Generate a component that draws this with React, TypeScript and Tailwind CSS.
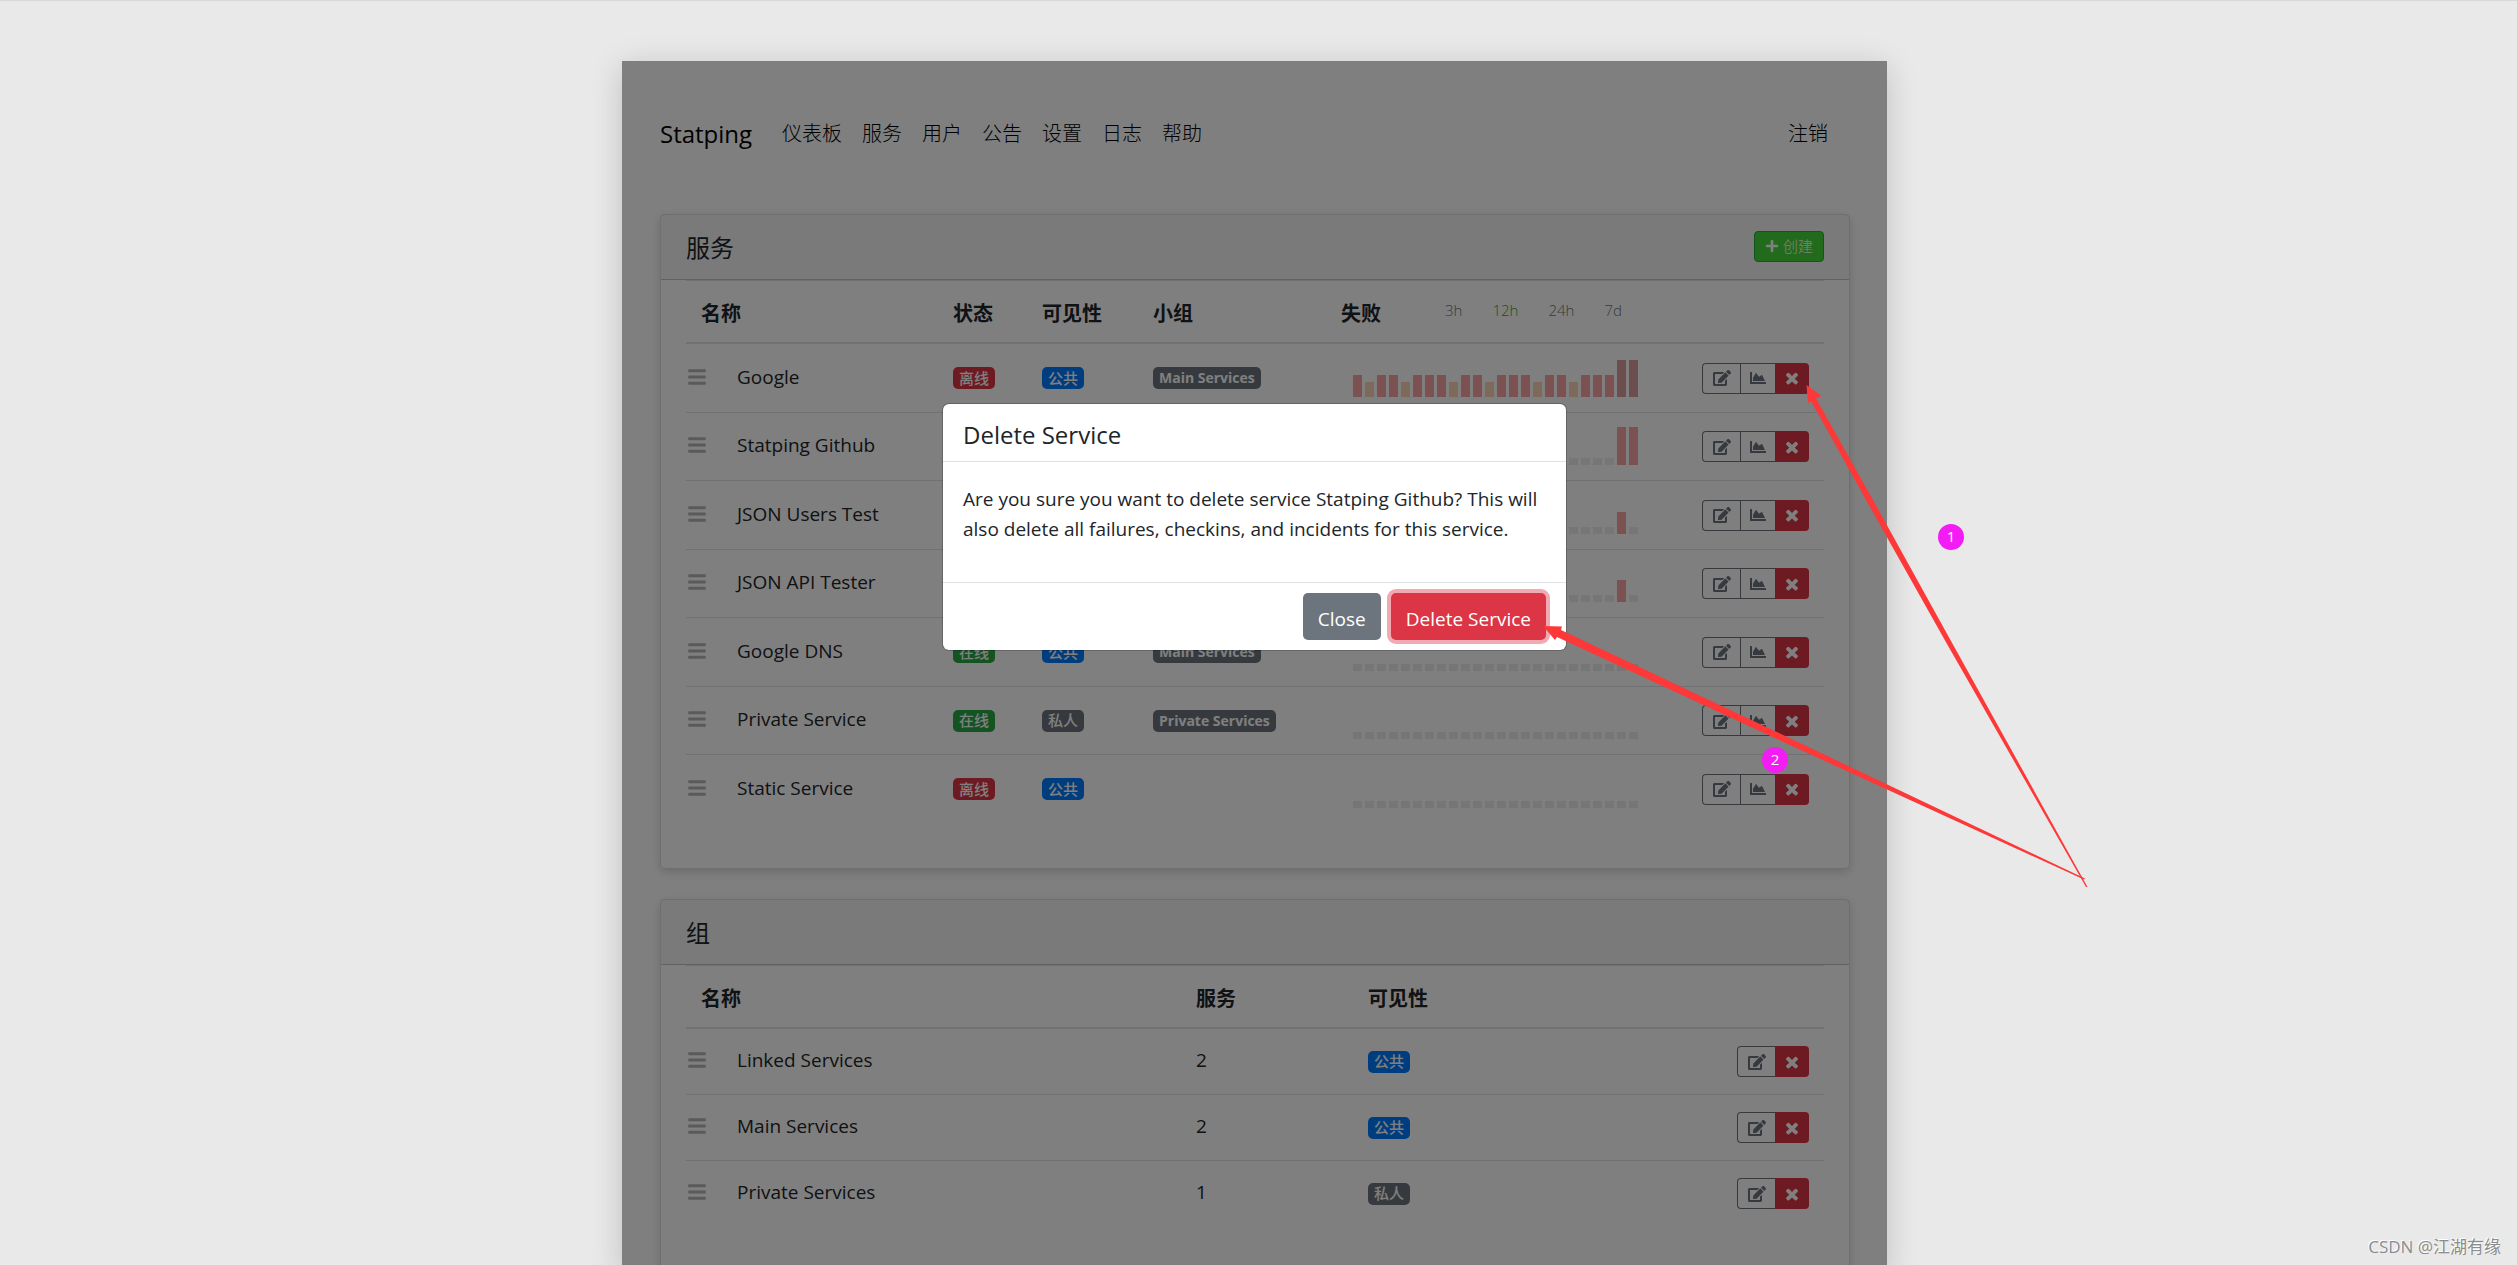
import type { ReactNode } from "react";
import { FaBars, FaChartArea, FaEdit, FaPlus } from "react-icons/fa";

type Tone = "red" | "green" | "blue" | "gray";

const toneClass: Record<Tone, string> = {
  red: "bg-[#dc3545]",
  green: "bg-[#28a745]",
  blue: "bg-[#007bff]",
  gray: "bg-[#6c757d]",
};

const barClass: Record<string, string> = {
  r: "h-[22px] bg-[#f8a2a2]",
  o: "h-[15px] bg-[#fcd4b4]",
  d: "h-[37px] bg-[#d89c9c]",
  t: "h-[38px] bg-[#f8a2a2]",
  ".": "h-[7px] bg-[#ececec]",
};

type Service = {
  name: string;
  online: boolean;
  visible: boolean;
  group?: string;
  bars: string;
};

const quiet = "........................";

const services: Service[] = [
  { name: "Google", online: false, visible: true, group: "Main Services", bars: "rorrorrrorrorrrorrorrrdd" },
  { name: "Statping Github", online: true, visible: true, group: "Main Services", bars: "......................tt" },
  { name: "JSON Users Test", online: true, visible: true, group: "Main Services", bars: "......................r." },
  { name: "JSON API Tester", online: true, visible: true, group: "Main Services", bars: "......................r." },
  { name: "Google DNS", online: true, visible: true, group: "Main Services", bars: quiet },
  { name: "Private Service", online: true, visible: false, group: "Private Services", bars: quiet },
  { name: "Static Service", online: false, visible: true, bars: quiet },
];

const groups = [
  { name: "Linked Services", count: 2, visible: true },
  { name: "Main Services", count: 2, visible: true },
  { name: "Private Services", count: 1, visible: false },
];

const navItems = ["仪表板", "服务", "用户", "公告", "设置", "日志", "帮助"];

const badge = "inline-flex h-[22px] items-center rounded-[5px] px-1.5 leading-none whitespace-nowrap text-white";

function Badge({ tone, children }: { tone: Tone; children: ReactNode }) {
  return <span className={`${badge} text-[15px] font-medium ${toneClass[tone]}`}>{children}</span>;
}

function GroupBadge({ children }: { children: ReactNode }) {
  return <span className={`${badge} bg-[#6c757d] text-sm font-bold`}>{children}</span>;
}

function Visibility({ visible }: { visible: boolean }) {
  return <Badge tone={visible ? "blue" : "gray"}>{visible ? "公共" : "私人"}</Badge>;
}

function NameCell({ name }: { name: string }) {
  return (
    <div className="flex items-center pb-[3px]">
      <FaBars className="ml-0.5 h-5 w-[18px] text-[#b4b4b4]" />
      <span className="ml-[31px] text-[19px] leading-6">{name}</span>
    </div>
  );
}

function CrossIcon() {
  return (
    <svg viewBox="0 0 1792 1792" className="size-[18px]" fill="currentColor" aria-hidden="true">
      <path d="M1490 1322q0 40-28 68l-136 136q-28 28-68 28t-68-28l-294-294-294 294q-28 28-68 28t-68-28l-136-136q-28-28-28-68t28-68l294-294-294-294q-28-28-28-68t28-68l136-136q28-28 68-28t68 28l294 294 294-294q28-28 68-28t68 28l136 136q28 28 28 68t-28 68l-294 294 294 294q28 28 28 68z" />
    </svg>
  );
}

function RowActions({ name, chart }: { name: string; chart?: boolean }) {
  return (
    <div className="ml-auto flex h-[31px] w-max text-[#6c757d]">
      <button
        aria-label={`Edit ${name}`}
        className="flex w-[38px] items-center justify-center rounded-l-[4px] border border-r-0 border-[#6c757d]"
      >
        <FaEdit className="h-4 w-[18px]" />
      </button>
      {chart && (
        <button
          aria-label={`Chart ${name}`}
          className="flex w-[35px] items-center justify-center border border-r-0 border-[#6c757d]"
        >
          <FaChartArea className="size-4" />
        </button>
      )}
      <button
        aria-label={`Delete ${name}`}
        className="flex w-[34px] items-center justify-center rounded-r-[4px] bg-[#dc3545] text-white"
      >
        <CrossIcon />
      </button>
    </div>
  );
}

function Card({ title, action, children }: { title: string; action?: ReactNode; children: ReactNode }) {
  return (
    <section className="rounded-[5px] border border-black/[.125] bg-white shadow-[0_3px_10px_rgba(0,0,0,0.16)]">
      <header className="flex h-[65px] items-center justify-between border-b border-black/[.2] bg-black/[.045] px-[25px]">
        <h2 className="pt-0.5 text-2xl">{title}</h2>
        {action}
      </header>
      <div className="px-[25px] pb-[45px]">{children}</div>
    </section>
  );
}

const th = "h-16 border-t border-b-2 border-[#dee2e6] px-[15px] pt-1 text-left text-xl font-bold";

function ServicesTable() {
  return (
    <table className="w-full table-fixed border-separate border-spacing-0">
      <colgroup>
        <col className="w-[252px]" />
        <col className="w-[89px]" />
        <col className="w-[111px]" />
        <col className="w-[188px]" />
        <col className="w-[340px]" />
        <col />
      </colgroup>
      <thead>
        <tr>
          <th className={th}>名称</th>
          <th className={th}>状态</th>
          <th className={th}>可见性</th>
          <th className={th}>小组</th>
          <th className={th}>
            <div className="flex items-center">
              <span>失败</span>
              <div className="ml-16 flex gap-[30px] pb-1.5 text-[15px] font-light text-[#6c757d]">
                <button>3h</button>
                <button className="text-[#28a745]">12h</button>
                <button>24h</button>
                <button>7d</button>
              </div>
            </div>
          </th>
          <th className={th} aria-label="操作" />
        </tr>
      </thead>
      <tbody>
        {services.map((s, i) => {
          const line = i > 0 ? "border-t border-[#dee2e6]" : "";
          return (
            <tr key={s.name} className={i > 0 && i % 2 === 0 ? "h-[69px]" : "h-[68px]"}>
              <td className={line}>
                <NameCell name={s.name} />
              </td>
              <td className={`px-[15px] ${line}`}>
                <div className="flex">
                  <Badge tone={s.online ? "green" : "red"}>{s.online ? "在线" : "离线"}</Badge>
                </div>
              </td>
              <td className={`px-[15px] ${line}`}>
                <div className="flex">
                  <Visibility visible={s.visible} />
                </div>
              </td>
              <td className={`px-[15px] ${line}`}>
                <div className="flex">{s.group && <GroupBadge>{s.group}</GroupBadge>}</div>
              </td>
              <td className={`px-[15px] align-bottom ${line}`}>
                <div className="mb-[15px] ml-3 flex h-[38px] items-end gap-[3px]">
                  {s.bars.split("").map((b, k) => (
                    <span key={k} className={`w-[9px] ${barClass[b]}`} />
                  ))}
                </div>
              </td>
              <td className={`pr-[15px] ${line}`}>
                <RowActions name={s.name} chart />
              </td>
            </tr>
          );
        })}
      </tbody>
    </table>
  );
}

function GroupsTable() {
  return (
    <table className="w-full table-fixed border-separate border-spacing-0">
      <colgroup>
        <col className="w-[495px]" />
        <col className="w-[172px]" />
        <col className="w-[280px]" />
        <col />
      </colgroup>
      <thead>
        <tr>
          <th className={th}>名称</th>
          <th className={th}>服务</th>
          <th className={th}>可见性</th>
          <th className={th} aria-label="操作" />
        </tr>
      </thead>
      <tbody>
        {groups.map((g, i) => {
          const line = i > 0 ? "border-t border-[#dee2e6]" : "";
          return (
            <tr key={g.name} className={i > 0 ? "h-[66px]" : "h-[65px]"}>
              <td className={line}>
                <NameCell name={g.name} />
              </td>
              <td className={`px-[15px] pb-[3px] text-[19px] ${line}`}>{g.count}</td>
              <td className={`px-[15px] ${line}`}>
                <div className="flex">
                  <Visibility visible={g.visible} />
                </div>
              </td>
              <td className={`pr-[15px] ${line}`}>
                <RowActions name={g.name} />
              </td>
            </tr>
          );
        })}
      </tbody>
    </table>
  );
}

function DeleteDialog() {
  return (
    <div className="absolute inset-0 flex items-start justify-center bg-black/50 pt-[343px]">
      <div
        role="dialog"
        aria-labelledby="dialog-title"
        className="w-full max-w-[623px] rounded-[6px] bg-white shadow-[0_0_0_1px_rgba(0,0,0,0.2)]"
      >
        <h3 id="dialog-title" className="border-b border-[#dee2e6] px-5 pt-3.5 pb-2.5 text-2xl leading-[33px] font-medium">
          Delete Service
        </h3>
        <p className="px-5 pt-[22px] pb-[38px] text-[19px] leading-[30px]">
          Are you sure you want to delete service Statping Github? This will also delete all failures, checkins, and
          incidents for this service.
        </p>
        <div className="flex justify-end gap-2.5 border-t border-[#dee2e6] px-5 py-2.5">
          <button className="h-[47px] rounded-[5px] bg-[#6c757d] px-[15px] pt-1.5 text-[19px] text-white">Close</button>
          <button className="h-[47px] rounded-[5px] bg-[#dc3545] px-[15px] pt-1.5 text-[19px] text-white shadow-[0_0_0_4px_#f1aab1]">
            Delete Service
          </button>
        </div>
      </div>
    </div>
  );
}

/* Tutorial arrows and step markers drawn above the page. */
function Annotations() {
  return (
    <>
      <svg
        className="pointer-events-none absolute top-0 left-0 overflow-visible"
        width="1265"
        height="1204"
        viewBox="622 61 1265 1204"
        fill="#fd3838"
        aria-hidden="true"
      >
        <path d="M1806.5 385L1821.5 396L1816 398.5L1873 500L1951 641L2087.5 887L2086 887L1947 644L1866 500L1811 401L1808 403Z" />
        <path d="M1543 626L1562 626.5L1561 630L1780 733.5L2085 878.5L2084 879.5L1780 740.5L1557 637L1555 640Z" />
      </svg>
      <span className="absolute top-[463px] left-[1316px] flex size-[26px] justify-center rounded-full bg-[#f41cf4] text-[15px] leading-6 text-white">
        1
      </span>
      <span className="absolute top-[686px] left-[1140px] flex size-[26px] justify-center rounded-full bg-[#f41cf4] text-[15px] leading-6 text-white">
        2
      </span>
    </>
  );
}

export default function App() {
  return (
    <div className="relative h-screen overflow-hidden border-t border-[#d8d8d8] bg-[#e9e9e9] pt-[60px] pr-2 font-['Open_Sans','Noto_Sans_CJK_SC',sans-serif] text-[#212529]">
      <div className="relative mx-auto min-h-full w-full max-w-[1265px] bg-white pt-[42px] pr-[37px] pl-[38px] shadow-[0_6px_30px_rgba(0,0,0,0.18)]">
        <nav className="mb-[50px] flex h-[61px] items-center pr-[22px] text-xl font-light text-black">
          <a href="#home" className="mr-[30px] text-2xl font-normal">
            Statping
          </a>
          <div className="flex gap-5">
            {navItems.map((item) => (
              <a key={item} href="#nav">
                {item}
              </a>
            ))}
          </div>
          <a href="#logout" className="ml-auto">
            注销
          </a>
        </nav>
        <main className="flex flex-col gap-[30px]">
          <Card
            title="服务"
            action={
              <button className="mb-0.5 flex h-[31px] items-center gap-1 rounded-[4px] border border-[#28a745] bg-[#46d638] px-2.5 text-[15px] font-light text-white">
                <FaPlus className="size-3.5" />
                创建
              </button>
            }
          >
            <ServicesTable />
          </Card>
          <Card title="组">
            <GroupsTable />
          </Card>
        </main>
        <DeleteDialog />
        <Annotations />
      </div>
      <span className="absolute right-4 bottom-1.5 text-[17px] text-[#8c8c8c] [text-shadow:-1px_-1px_0_#fff]">
        CSDN @江湖有缘
      </span>
    </div>
  );
}
